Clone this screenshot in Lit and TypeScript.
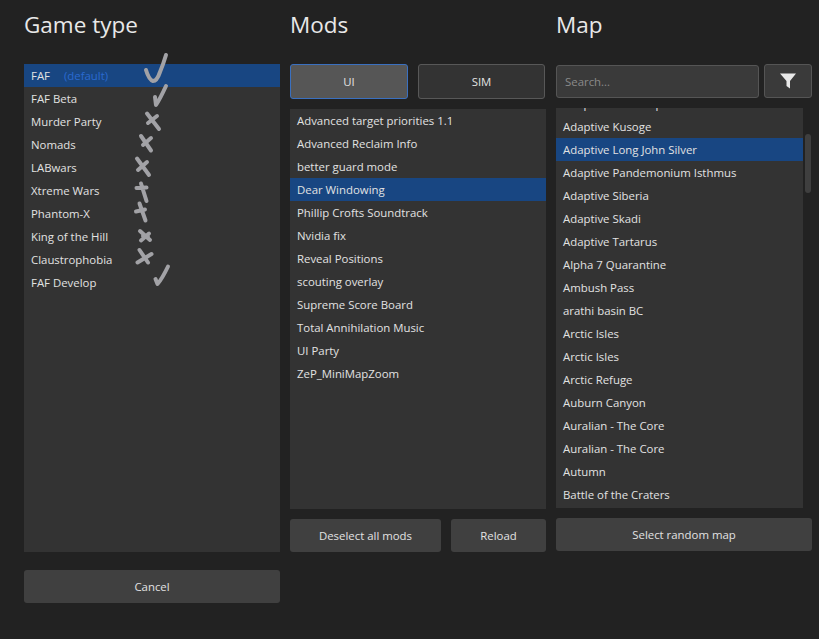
import { LitElement, html, css, svg } from "lit";
import { customElement } from "lit/decorators.js";

const games = ["FAF","FAF Beta","Murder Party","Nomads","LABwars","Xtreme Wars","Phantom-X","King of the Hill","Claustrophobia","FAF Develop"];
const mods = ["Advanced target priorities 1.1","Advanced Reclaim Info","better guard mode","Dear Windowing","Phillip Crofts Soundtrack","Nvidia fix","Reveal Positions","scouting overlay","Supreme Score Board","Total Annihilation Music","UI Party","ZeP_MiniMapZoom"];
const maps = ["Adaptive Isis Temple","Adaptive Kusoge","Adaptive Long John Silver","Adaptive Pandemonium Isthmus","Adaptive Siberia","Adaptive Skadi","Adaptive Tartarus","Alpha 7 Quarantine","Ambush Pass","arathi basin BC","Arctic Isles","Arctic Isles","Arctic Refuge","Auburn Canyon","Auralian - The Core","Auralian - The Core","Autumn","Battle of the Craters"];

const marks = [
  "M146 70 Q149 80 153 81 Q157 81 160 72 Q163 65 166 55",
  "M155 97 L156 105 Q160 99 166 86",
  "M147 113.5 L159 129 M148 123 L157 116",
  "M141 136 L151 150.5 M143 145 L151 138",
  "M137 158.5 L149 175 M138 170 L147 162",
  "M141 183.5 L146.5 201 M136.5 188 L146.5 187.5",
  "M139.5 203.5 L145.5 220.5 M136 211.5 L145 209.5",
  "M140 231 L150 240 M141 240.5 L149 233.5 M143 236 L148 237",
  "M139.5 250 L148 262.5 M137.5 262.5 L151.5 254",
  "M155.5 279 L157.5 284 Q162 279 168 266.5",
];

@customElement("app-root")
export class AppRoot extends LitElement {
  static styles = css`
    :host { display: block; width: 819px; height: 639px; background: #222222; position: relative; overflow: hidden;
      font-family: "Open Sans", "Noto Sans", sans-serif; font-size: 11.4px; color: #e2e2e2; }
    .page { display: grid; grid-template-columns: 256px 256px 256px; column-gap: 10px; padding: 0 7px 0 24px; }
    .col { display: flex; flex-direction: column; height: 639px; }
    h1 { margin: 0; font-size: 22.5px; font-weight: 400; color: #e8e8e8; height: 64px; line-height: 50px; }
    .list { background: #333333; overflow: hidden; flex: none; }
    .row { height: 23px; line-height: 23px; padding-left: 7px; white-space: nowrap; }
    .row.sel { background: #184682; }
    .def { color: #2a6ad0; margin-left: 14px; }
    .games { height: 488px; }
    .btn { background: #404040; border-radius: 3px; display: flex; align-items: center; justify-content: center; box-sizing: border-box; height: 33px; }
    .cancel { margin-top: 18px; }
    .tabs { display: flex; gap: 10px; height: 35px; padding-right: 1px; }
    .tab { flex: 1; box-sizing: border-box; background: #333333; border: 1px solid #585858; border-radius: 3px; height: 35px; display: flex; align-items: center; justify-content: center; }
    .tab.on { background: #565656; border-color: #3a70c0; flex: 0 0 118px; }
    .mods { height: 400px; margin-top: 10px; }
    .foot { display: flex; gap: 10px; margin-top: 10px; }
    .foot .a { flex: 0 0 151px; }
    .foot .b { flex: 1; }
    .search { display: flex; gap: 5px; height: 33px; margin-top: 1px; }
    .input { flex: 0 0 203px; box-sizing: border-box; background: #3a3a3a; border: 1px solid #555555; border-radius: 3px; padding-left: 8px; color: #8a8a8a; display: flex; align-items: center; }
    .fbtn { flex: 1; box-sizing: border-box; height: 34px; margin-top: -1px; background: #3a3a3a; border: 1px solid #555555; border-radius: 3px; display: flex; align-items: center; justify-content: center; }
    .mapbox { display: flex; margin-top: 10px; height: 400px; }
    .maps { width: 247px; height: 400px; }
    .maps .inner { margin-top: -16px; }
    .track { flex: 1; display: flex; justify-content: flex-end; }
    .thumb { width: 6px; height: 59px; margin-top: 26px; background: #3f3f3f; border-radius: 3px; margin-right: 1px; }
    .random { margin-top: 10px; }
    .marks { position: absolute; inset: 0; width: 819px; height: 639px; pointer-events: none; }
    .marks path { fill: none; stroke: #a2a2a6; stroke-width: 4; stroke-linecap: round; stroke-linejoin: round; }
  `;
  render() {
    return html`
      <div class="page">
        <div class="col">
          <h1>Game type</h1>
          <div class="list games">
            ${games.map((g, i) => html`<div class="row ${i === 0 ? "sel" : ""}">${g}${i === 0 ? html`<span class="def">(default)</span>` : ""}</div>`)}
          </div>
          <div class="btn cancel">Cancel</div>
        </div>
        <div class="col">
          <h1>Mods</h1>
          <div class="tabs"><div class="tab on">UI</div><div class="tab">SIM</div></div>
          <div class="list mods">
            ${mods.map((m, i) => html`<div class="row ${i === 3 ? "sel" : ""}">${m}</div>`)}
          </div>
          <div class="foot"><div class="btn a">Deselect all mods</div><div class="btn b">Reload</div></div>
        </div>
        <div class="col">
          <h1>Map</h1>
          <div class="search">
            <div class="input">Search...</div>
            <div class="fbtn"><svg width="20" height="20" viewBox="0 0 20 20"><path fill="#e8e8e8" d="M2 2.5 H18 L12 10 V17.5 L8.5 15 V10 Z"/></svg></div>
          </div>
          <div class="mapbox">
            <div class="list maps"><div class="inner">
              ${maps.map((m, i) => html`<div class="row ${i === 2 ? "sel" : ""}">${m}</div>`)}
            </div></div>
            <div class="track"><div class="thumb"></div></div>
          </div>
          <div class="btn random">Select random map</div>
        </div>
      </div>
      <svg class="marks" viewBox="0 0 819 639">${marks.map((d) => svg`<path d=${d}></path>`)}</svg>
    `;
  }
}
